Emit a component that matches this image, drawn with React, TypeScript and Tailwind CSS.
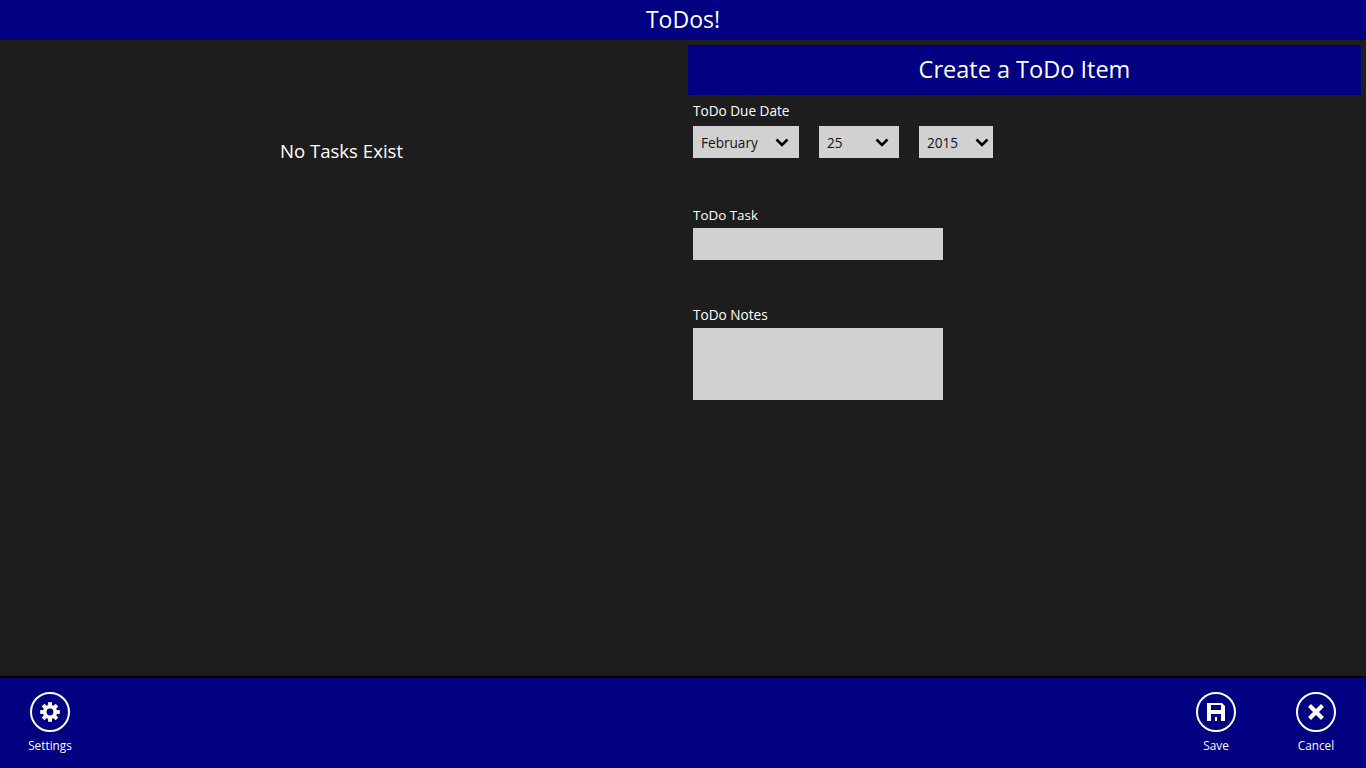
import React from "react";

const font = { fontFamily: '"Open Sans", "Noto Sans", sans-serif' };

function Chevron() {
	return (
		<svg width="14" height="9" viewBox="0 0 14 9" className="shrink-0">
			<path d="M1.5 1.5 L7 7 L12.5 1.5" fill="none" stroke="#000" strokeWidth="2.6" />
		</svg>
	);
}

function DropDown({ value, width, right }: { value: string; width: string; right: string }) {
	return (
		<div className={`flex h-8 items-center justify-between bg-[#d1d1d1] pl-2 text-[13.6px] text-[#111] ${width} ${right}`}>
			<span className="pt-[2px]">{value}</span>
			<Chevron />
		</div>
	);
}

function GearIcon() {
	const teeth = [0, 45, 90, 135];
	return (
		<svg width="20" height="20" viewBox="0 0 20 20">
			{teeth.map((t) => (
				<rect key={t} x="8.1" y="0.2" width="3.8" height="19.6" fill="#fff" transform={`rotate(${t} 10 10)`} />
			))}
			<circle cx="10" cy="10" r="7.2" fill="#fff" />
			<circle cx="10" cy="10" r="3.4" fill="#000080" />
		</svg>
	);
}

function SaveIcon() {
	return (
		<svg width="20" height="20" viewBox="0 0 20 20">
			<path d="M1 1 H16 L19 4 V19 H1 Z" fill="#fff" />
			<rect x="5" y="3" width="10" height="5" fill="#000080" />
			<rect x="5" y="12" width="10" height="7" fill="#000080" />
			<rect x="9" y="15" width="2" height="4" fill="#fff" />
		</svg>
	);
}

function CancelIcon() {
	return (
		<svg width="20" height="20" viewBox="0 0 20 20">
			<path d="M3.5 3.5 L16.5 16.5 M16.5 3.5 L3.5 16.5" stroke="#fff" strokeWidth="4.2" fill="none" />
		</svg>
	);
}

function AppBarButton({ label, children }: { label: string; children: React.ReactNode }) {
	return (
		<div className="flex w-[100px] flex-col items-center pt-[14px]">
			<div className="flex h-10 w-10 items-center justify-center rounded-full border-2 border-white">
				{children}
			</div>
			<div className="mt-1 text-[11.8px] leading-[18px] text-white">{label}</div>
		</div>
	);
}

export default function App() {
	return (
		<div className="flex h-[768px] w-[1366px] flex-col overflow-hidden bg-[#1d1d1d] text-white" style={font}>
			<div className="flex h-10 items-center justify-center bg-[#000080] pb-[2px] text-[23px]">ToDos!</div>

			<div className="grid flex-1 grid-cols-2">
				<div className="pt-[96px] text-center text-[18.6px] leading-[30px]">No Tasks Exist</div>

				<div className="pl-[5px] pr-[5px] pt-[5px]">
					<div className="flex h-[50px] items-center justify-center bg-[#000080] text-[23.5px]">
						Create a ToDo Item
					</div>
					<div className="pl-[5px]">
						<div className="mt-[6px] text-[13.6px] leading-5">ToDo Due Date</div>
						<div className="mt-[5px] flex gap-5">
							<DropDown value="February" width="w-[106px]" right="pr-[10px]" />
							<DropDown value="25" width="w-[80px]" right="pr-[10px]" />
							<DropDown value="2015" width="w-[74px]" right="pr-1" />
						</div>
						<div className="mt-[47px] text-[13.4px] leading-5">ToDo Task</div>
						<input className="mt-[3px] block h-8 w-[250px] bg-[#d1d1d1]" />
						<div className="mt-[45px] text-[13.6px] leading-5">ToDo Notes</div>
						<textarea className="mt-[3px] block h-[72px] w-[250px] resize-none bg-[#d1d1d1]" />
					</div>
				</div>
			</div>

			<div className="h-[2px] bg-black" />
			<div className="flex h-[90px] items-start justify-between bg-[#000080]">
				<AppBarButton label="Settings">
					<GearIcon />
				</AppBarButton>
				<div className="flex">
					<AppBarButton label="Save">
						<SaveIcon />
					</AppBarButton>
					<AppBarButton label="Cancel">
						<CancelIcon />
					</AppBarButton>
				</div>
			</div>
		</div>
	);
}
